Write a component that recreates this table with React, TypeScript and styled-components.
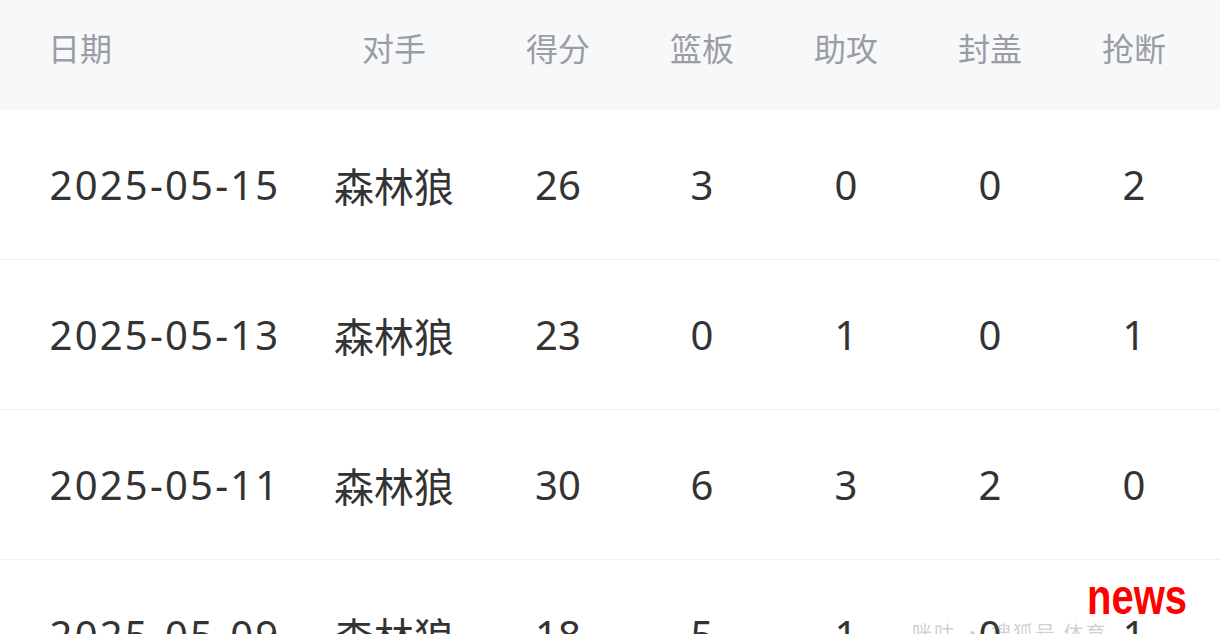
import React from 'react';
import styled, { createGlobalStyle } from 'styled-components';

const GlobalStyle = createGlobalStyle`
  html, body {
    margin: 0;
    padding: 0;
    background: #ffffff;
    overflow: hidden;
  }
  body {
    font-family: 'Noto Sans', 'Noto Sans CJK SC', sans-serif;
  }
`;

const Page = styled.div`
  position: relative;
  width: 1220px;
  height: 634px;
  overflow: hidden;
  background: #ffffff;
`;

const Grid = styled.div`
  display: grid;
  grid-template-columns: 302px 184px repeat(5, 144px);
  padding-right: 14px;
`;

const HeaderRow = styled(Grid)`
  height: 110px;
  padding-bottom: 16px;
  box-sizing: border-box;
  background: #f7f8fa;
  align-items: center;
`;

const HeadCell = styled.div<{ $left?: boolean }>`
  font-family: 'Noto Sans CJK SC', sans-serif;
  font-size: 32px;
  color: #9a9da3;
  text-align: ${(p) => (p.$left ? 'left' : 'center')};
  padding-left: ${(p) => (p.$left ? '48px' : '0')};
`;

const Row = styled(Grid)`
  height: 150px;
  box-sizing: border-box;
  border-bottom: 1px solid #f0f0f0;
  align-items: center;
`;

const Cell = styled.div<{ $date?: boolean; $cjk?: boolean }>`
  font-family: ${(p) => (p.$cjk ? "'Noto Sans CJK SC', sans-serif" : "'Noto Sans', sans-serif")};
  font-size: 40px;
  color: #333333;
  text-align: center;
  padding-left: ${(p) => (p.$date ? '28px' : '0')};
  letter-spacing: ${(p) => (p.$date ? '2.2px' : '0')};
  line-height: 1;
`;

const Watermark = styled.div`
  position: absolute;
  right: 33px;
  top: 568px;
  font-family: 'Liberation Sans', Arial, sans-serif;
  font-weight: 700;
  font-size: 50px;
  color: #ff0000;
  transform: scaleX(0.8);
  transform-origin: right center;
`;

const FaintMark = styled.div`
  position: absolute;
  left: 912px;
  top: 618px;
  font-family: 'Noto Sans CJK SC', sans-serif;
  font-size: 20px;
  color: rgba(90, 90, 90, 0.3);
  letter-spacing: 2px;
  white-space: nowrap;
`;

const columns = ['日期', '对手', '得分', '篮板', '助攻', '封盖', '抢断'];

const games = [
  { date: '2025-05-15', opp: '森林狼', stats: [26, 3, 0, 0, 2] },
  { date: '2025-05-13', opp: '森林狼', stats: [23, 0, 1, 0, 1] },
  { date: '2025-05-11', opp: '森林狼', stats: [30, 6, 3, 2, 0] },
  { date: '2025-05-09', opp: '森林狼', stats: [18, 5, 1, 0, 1] },
];

export default function App() {
  return (
    <Page>
      <GlobalStyle />
      <HeaderRow>
        {columns.map((c, i) => (
          <HeadCell key={c} $left={i === 0}>
            {c}
          </HeadCell>
        ))}
      </HeaderRow>
      {games.map((g) => (
        <Row key={g.date}>
          <Cell $date>{g.date}</Cell>
          <Cell $cjk>{g.opp}</Cell>
          {g.stats.map((s, i) => (
            <Cell key={i}>{s}</Cell>
          ))}
        </Row>
      ))}
      <FaintMark>咪咕 · 搜狐号 体育</FaintMark>
      <Watermark>news</Watermark>
    </Page>
  );
}
